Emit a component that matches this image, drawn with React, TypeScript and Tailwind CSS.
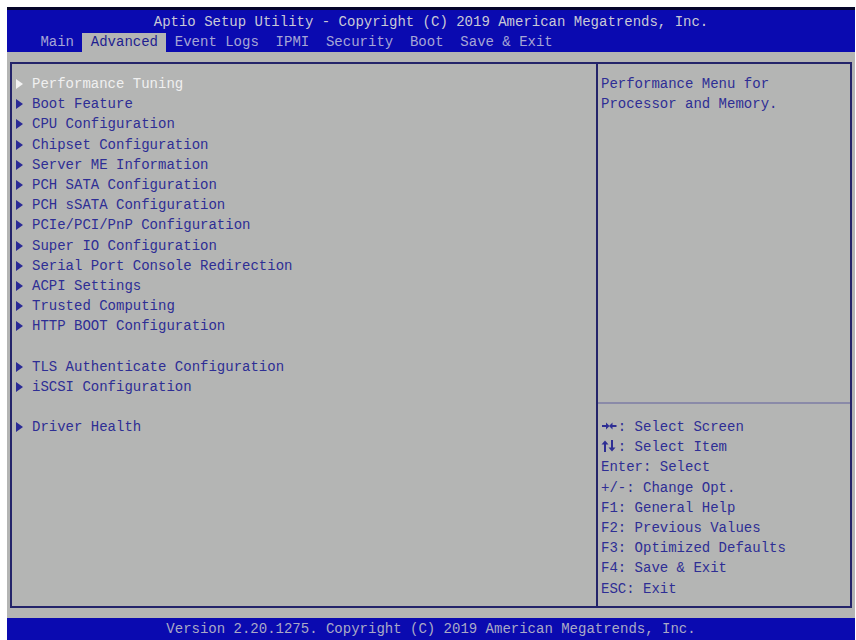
const MENU_TABS = ['Main', 'Advanced', 'Event Logs', 'IPMI', 'Security', 'Boot', 'Save & Exit'];

// null = blank line between groups
const ITEMS: (string | null)[] = [
  'Performance Tuning',
  'Boot Feature',
  'CPU Configuration',
  'Chipset Configuration',
  'Server ME Information',
  'PCH SATA Configuration',
  'PCH sSATA Configuration',
  'PCIe/PCI/PnP Configuration',
  'Super IO Configuration',
  'Serial Port Console Redirection',
  'ACPI Settings',
  'Trusted Computing',
  'HTTP BOOT Configuration',
  null,
  'TLS Authenticate Configuration',
  'iSCSI Configuration',
  null,
  'Driver Health',
];

const HELP = [
  'Enter: Select',
  '+/-: Change Opt.',
  'F1: General Help',
  'F2: Previous Values',
  'F3: Optimized Defaults',
  'F4: Save & Exit',
  'ESC: Exit',
];

function Arrow({ active }: { active: boolean }) {
  return (
    <svg width="7" height="10" viewBox="0 0 7 10" className="shrink-0">
      <path d="M0 0 L7 5 L0 10 Z" fill={active ? '#f2f2f2' : '#2a2a96'} />
    </svg>
  );
}

// key glyphs drawn two-character wide, like the firmware font
function LeftRightKeys() {
  return (
    <svg width="16.8" height="12" viewBox="0 0 16.8 12" className="inline-block align-[-1px]">
      <g fill="#2e2e94">
        <rect x="1" y="5" width="5" height="2" />
        <path d="M5 2.5 L8.5 6 L5 9.5 Z" />
        <rect x="10.5" y="5" width="5" height="2" />
        <path d="M11.5 2.5 L8 6 L11.5 9.5 Z" />
      </g>
    </svg>
  );
}

function UpDownKeys() {
  return (
    <svg width="16.8" height="12" viewBox="0 0 16.8 12" className="inline-block align-[-1px]">
      <g fill="#2e2e94">
        <rect x="3" y="4" width="2" height="8" />
        <path d="M0.5 4.5 L4 0.5 L7.5 4.5 Z" />
        <rect x="10" y="0" width="2" height="8" />
        <path d="M7.5 7.5 L11 11.5 L14.5 7.5 Z" />
      </g>
    </svg>
  );
}

export default function App() {
  return (
    <div className="h-[640px] w-[856px] bg-white pl-[7px] pr-px pt-[7px] font-['Liberation_Mono',monospace] text-[14px]">
      <div className="flex h-full flex-col">
        <div className="h-[45px] border-t-[3px] border-[#05052a] bg-[#0a0ab0]">
          <div className="flex h-[23px] items-center justify-center pt-px text-[#c9c9d6]">
            Aptio Setup Utility - Copyright (C) 2019 American Megatrends, Inc.
          </div>
          <div className="flex h-[19px] items-stretch pl-[25px] whitespace-pre">
            {MENU_TABS.map((tab) => (
              <div
                key={tab}
                className={
                  tab === 'Advanced'
                    ? 'flex items-center bg-[#b4b5b4] px-[8.4px] text-[#1e1e90]'
                    : 'flex items-center px-[8.4px] text-[#a6a6d6]'
                }
              >
                {tab}
              </div>
            ))}
          </div>
        </div>

        <div className="flex-1 bg-[#b4b5b4] pb-[10px] pl-[3px] pr-[3px] pt-[10px]">
          <div className="flex h-full border-2 border-[#24246a]">
            <div className="w-[584px] pl-[4px] pt-[10px] leading-[20.2px]">
              {ITEMS.map((item, i) =>
                item === null ? (
                  <div key={i} className="h-[20.2px]" />
                ) : (
                  <div key={i} className="flex h-[20.2px] items-center whitespace-pre">
                    <Arrow active={i === 0} />
                    <span className={i === 0 ? 'ml-[9px] text-[#f0f0f0]' : 'ml-[9px] text-[#2e2e94]'}>
                      {item}
                    </span>
                  </div>
                ),
              )}
            </div>
            <div className="flex flex-1 flex-col border-l-2 border-[#24246a]">
              <div className="h-[340px] border-b-2 border-[#8a8aa8] pl-[3px] pt-[10px] leading-[20.2px] text-[#2e2e94]">
                <div>Performance Menu for</div>
                <div>Processor and Memory.</div>
              </div>
              <div className="pl-[3px] pt-[13px] leading-[20.2px] text-[#2e2e94]">
                <div className="whitespace-pre">
                  <LeftRightKeys />: Select Screen
                </div>
                <div className="whitespace-pre">
                  <UpDownKeys />: Select Item
                </div>
                {HELP.map((line) => (
                  <div key={line} className="whitespace-pre">
                    {line}
                  </div>
                ))}
              </div>
            </div>
          </div>
        </div>

        <div className="flex h-[22px] items-center justify-center bg-[#0a0ab0] text-[#a9a9c6]">
          Version 2.20.1275. Copyright (C) 2019 American Megatrends, Inc.
        </div>
      </div>
    </div>
  );
}
